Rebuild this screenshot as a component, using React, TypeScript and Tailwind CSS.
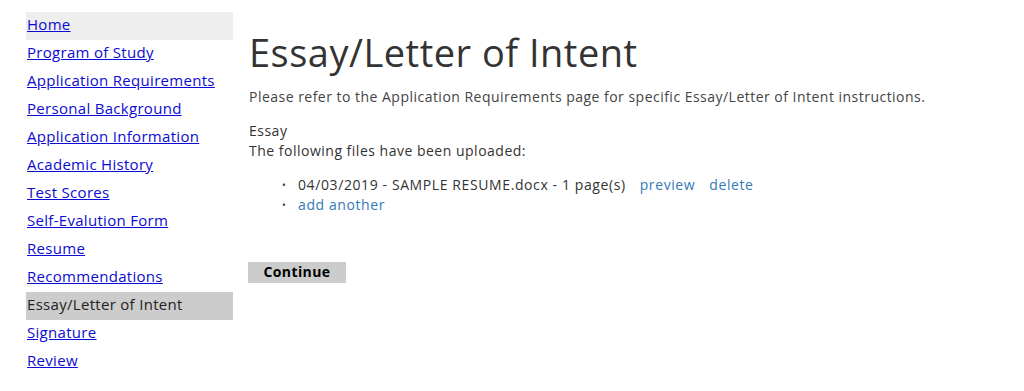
import React from "react";

const items = [
  "Home",
  "Program of Study",
  "Application Requirements",
  "Personal Background",
  "Application Information",
  "Academic History",
  "Test Scores",
  "Self-Evalution Form",
  "Resume",
  "Recommendations",
  "Essay/Letter of Intent",
  "Signature",
  "Review",
];

export default function App() {
  return (
    <div
      className="flex bg-white text-[#333] w-[1024px] h-[391px] overflow-hidden"
      style={{ fontFamily: '"Open Sans", Arial, sans-serif' }}
    >
      <nav className="w-[207px] ml-[26px] mt-[12px] flex flex-col shrink-0">
        {items.map((it, i) => {
          const active = it === "Essay/Letter of Intent";
          const home = i === 0;
          return (
            <div
              key={it}
              className={`h-[28px] flex items-center pl-[1px] pb-[4px] text-[15px] tracking-[0.3px] ${
                active ? "bg-[#cccccc] text-[#222]" : home ? "bg-[#eeeeee]" : ""
              }`}
            >
              {active ? (
                <span>{it}</span>
              ) : (
                <a href="#" className="text-[#0b0bd3] underline">
                  {it}
                </a>
              )}
            </div>
          );
        })}
      </nav>
      <main className="ml-[15px] pt-[30px] flex-1">
        <h1 className="text-[38px] tracking-[0.5px] leading-[44px] text-[#333] ml-[1px]">Essay/Letter of Intent</h1>
        <p className="mt-[12px] text-[14px] tracking-[0.48px] text-[#444] ml-[1px]">
          Please refer to the Application Requirements page for specific Essay/Letter of Intent instructions.
        </p>
        <div className="mt-[14px] text-[14px] tracking-[0.5px] leading-[20px] text-[#333] ml-[1px]">
          <div>Essay</div>
          <div>The following files have been uploaded:</div>
        </div>
        <ul className="mt-[14px] ml-[34px] text-[14px] tracking-[0.6px] leading-[20px] text-[#333]">
          <li className="flex items-center">
            <span className="w-[16px] text-[10px]">•</span>
            <span>04/03/2019 - SAMPLE RESUME.docx - 1 page(s)</span>
            <a href="#" className="ml-[14px] text-[#337ab7]">preview</a>
            <a href="#" className="ml-[14px] text-[#337ab7]">delete</a>
          </li>
          <li className="flex items-center">
            <span className="w-[16px] text-[10px]">•</span>
            <a href="#" className="text-[#337ab7]">add another</a>
          </li>
        </ul>
        <button className="mt-[47px] w-[98px] h-[21px] bg-[#cccccc] text-[14px] tracking-[0.4px] font-bold text-black leading-[19px] pb-[2px]">
          Continue
        </button>
      </main>
    </div>
  );
}
